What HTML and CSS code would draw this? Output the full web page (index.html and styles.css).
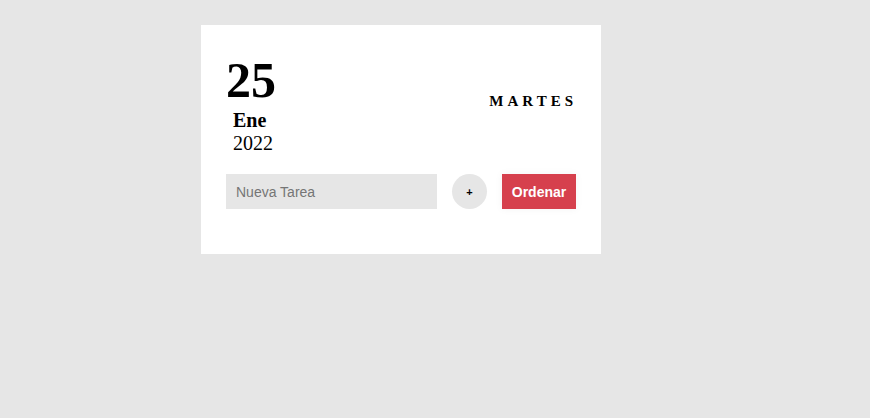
FILE: index.html
```html
<!DOCTYPE html>
<html lang="es">
<head>
<meta charset="utf-8">
<title>Tareas</title>
<link rel="stylesheet" href="styles.css">
</head>
<body>
<div class="card">
  <div class="header">
    <div class="date">
      <div class="day">25</div>
      <div class="month">Ene</div>
      <div class="year">2022</div>
    </div>
    <div class="weekday">MARTES</div>
  </div>
  <div class="form">
    <input class="task" type="text" placeholder="Nueva Tarea">
    <button class="add">+</button>
    <button class="order">Ordenar</button>
  </div>
</div>
</body>
</html>
```
FILE: styles.css
```css
html, body {
  margin: 0;
  padding: 0;
  background: #e6e6e6;
}
body {
  font-family: "Liberation Serif", "Times New Roman", serif;
  padding: 25px 0 0 201px;
}
.card {
  width: 350px;
  background: #fff;
  padding: 28px 25px 45px;
}
.header {
  display: flex;
  justify-content: space-between;
  align-items: center;
}
.date {
  display: flex;
  flex-direction: column;
}
.day {
  font-size: 50px;
  font-weight: bold;
  line-height: 55px;
  color: #000;
}
.month {
  font-size: 20px;
  font-weight: bold;
  line-height: 23px;
  padding-left: 7px;
  margin-top: 1px;
}
.year {
  font-size: 20px;
  line-height: 23px;
  padding-left: 7px;
}
.weekday {
  font-size: 15px;
  font-weight: bold;
  letter-spacing: 4px;
  margin-right: -1px;
  margin-top: -5px;
}
.form {
  display: flex;
  align-items: center;
  margin-top: 19px;
}
.task {
  width: 211px;
  height: 35px;
  box-sizing: border-box;
  border: none;
  background: #e6e6e6;
  padding: 0 10px;
  font-family: "Liberation Sans", Arial, sans-serif;
  font-size: 14px;
  outline: none;
}
.task::placeholder {
  color: #757575;
}
.add {
  width: 35px;
  height: 35px;
  border-radius: 50%;
  border: none;
  background: #e6e6e6;
  margin-left: 15px;
  font-family: "Liberation Sans", Arial, sans-serif;
  font-size: 11px;
  font-weight: bold;
  color: #000;
  padding: 0;
}
.order {
  height: 35px;
  width: 74px;
  margin-left: 15px;
  border: none;
  background: #d6404d;
  color: #fff;
  font-family: "Liberation Sans", Arial, sans-serif;
  font-size: 14px;
  font-weight: bold;
  padding: 0;
  box-shadow: 0 0 8px rgba(0, 0, 0, 0.05);
}
```
